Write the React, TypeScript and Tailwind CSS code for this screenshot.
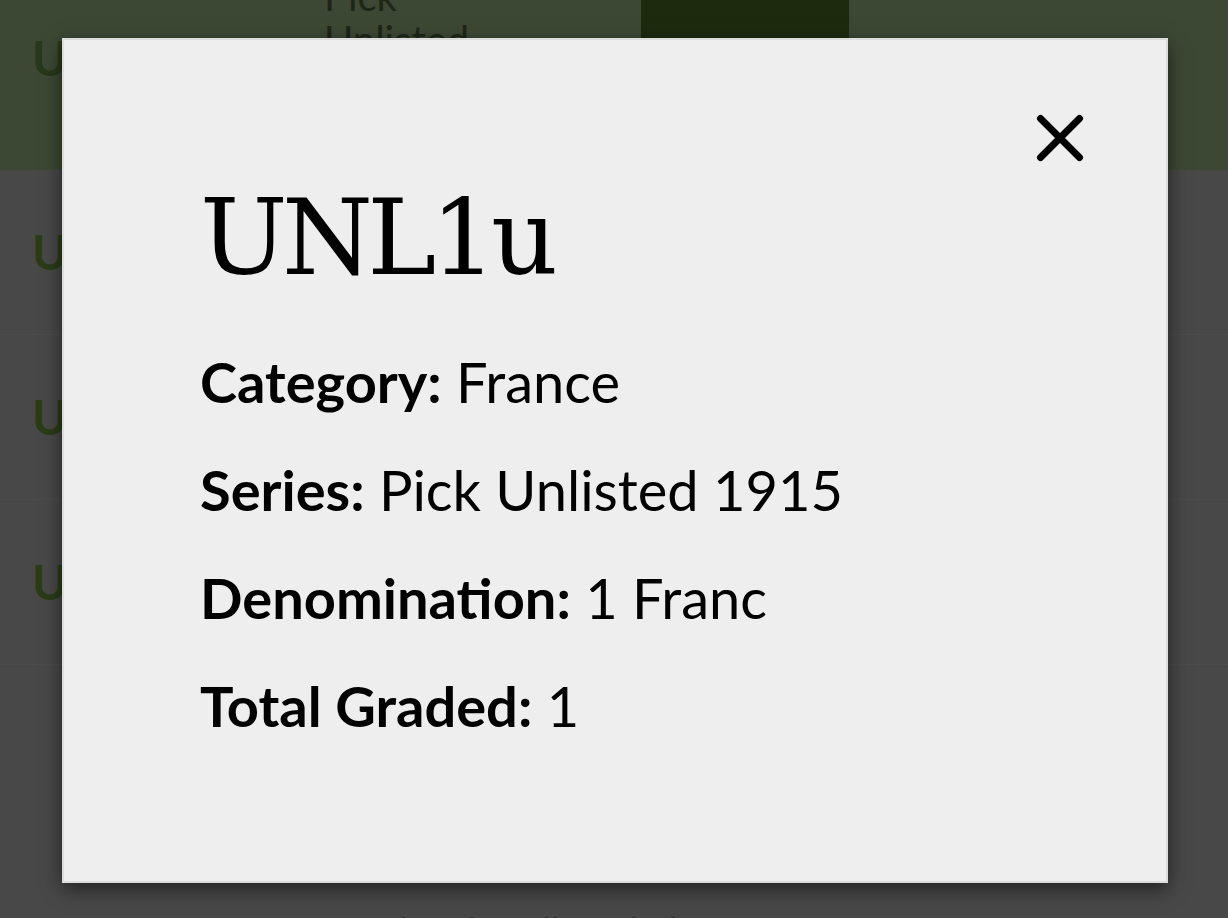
const rows = [
    { code: "UNL1u", series: "Pick Unlisted 1915", denom: "1 Franc", graded: "1" },
    { code: "UNL2a", series: "Pick Unlisted 1916", denom: "2 Francs", graded: "3" },
    { code: "UNL3b", series: "Pick Unlisted 1917", denom: "5 Francs", graded: "2" },
    { code: "UNL4c", series: "Pick Unlisted 1918", denom: "10 Francs", graded: "1" },
]

function Field({ label, value }: { label: string; value: string }) {
    return (
        <p className="text-[56px] leading-[108px] text-black">
            <span className="font-bold">{label}:</span> {value}
        </p>
    )
}

export default function App() {
    return (
        <div className="relative w-[1228px] h-[918px] overflow-hidden bg-[#484848] font-['Lato',sans-serif]">
            {/* Table behind the dialog (dimmed) */}
            <div className="flex flex-col">
                <div className="grid grid-cols-[300px_341px_208px_379px] h-[170px] bg-[#3c4834]">
                    <div className="pl-8 pt-[22px] text-[48px] font-bold text-[#28381a]">UNL1u</div>
                    <div className="pl-6 -mt-[26px] w-[200px] text-[40px] leading-[44px] text-[#1e2618]">Pick Unlisted 1915</div>
                    <div className="bg-[#1c2b0e] h-[42px]" />
                    <div className="pl-[180px] pt-[22px] text-[40px] text-[#1e2618]">2</div>
                </div>
                {rows.slice(1).map((r) => (
                    <div key={r.code} className="h-[165px] border-b border-[#4b4b4b] pl-8 pt-[46px] text-[48px] font-bold text-[#2a3d16]">
                        {r.code}
                    </div>
                ))}
                <div className="pt-[238px] pl-[380px] text-[36px] text-[#2c2c2c]">Showing all graded notes</div>
            </div>

            {/* Dialog */}
            <div className="absolute left-[62px] top-[38px] w-[1106px] h-[845px] bg-[#eeeeee] border-2 border-[#dcdcdc] shadow-[0_6px_18px_rgba(0,0,0,0.55)]">
                <button className="absolute left-[972px] top-[74px] text-black">
                    <svg width="48" height="48" viewBox="0 0 48 48" fill="none" stroke="currentColor" strokeWidth="7" strokeLinecap="round">
                        <path d="M4.5 4.5L43.5 43.5M43.5 4.5L4.5 43.5" />
                    </svg>
                </button>
                <div className="pl-[136px] pt-[133px]">
                    <h2 className="font-['DejaVu_Serif',serif] text-[104px] leading-[130px] tracking-[-0.055em] text-black">UNL1u</h2>
                    <div className="mt-[25px]">
                        <Field label="Category" value="France" />
                        <Field label="Series" value="Pick Unlisted 1915" />
                        <Field label="Denomination" value="1 Franc" />
                        <Field label="Total Graded" value="1" />
                    </div>
                </div>
            </div>
        </div>
    )
}
